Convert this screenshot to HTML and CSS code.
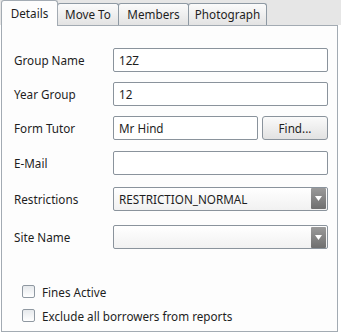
FILE: index.html
```html
<!DOCTYPE html>
<html>
<head>
<meta charset="utf-8">
<link rel="stylesheet" href="styles.css">
</head>
<body>
<div class="window">
  <div class="tabstrip">
    <div class="tab selected">Details</div>
    <div class="tab">Move To</div>
    <div class="tab">Members</div>
    <div class="tab">Photograph</div>
  </div>
  <div class="panel">
    <div class="row r1">
      <label class="lbl">Group Name</label>
      <div class="field">12Z</div>
    </div>
    <div class="row r2">
      <label class="lbl">Year Group</label>
      <div class="field">12</div>
    </div>
    <div class="row r3">
      <label class="lbl">Form Tutor</label>
      <div class="field short">Mr Hind</div>
      <div class="btn">Find...</div>
    </div>
    <div class="row r4">
      <label class="lbl">E-Mail</label>
      <div class="field"></div>
    </div>
    <div class="row r5">
      <label class="lbl">Restrictions</label>
      <div class="field combo"><span class="val">RESTRICTION_NORMAL</span><span class="drop"><svg width="7" height="5" viewBox="0 0 7 5"><path d="M0 0H7L3.5 5Z" fill="#fff"/></svg></span></div>
    </div>
    <div class="row r6">
      <label class="lbl">Site Name</label>
      <div class="field combo"><span class="val"></span><span class="drop"><svg width="7" height="5" viewBox="0 0 7 5"><path d="M0 0H7L3.5 5Z" fill="#fff"/></svg></span></div>
    </div>
    <div class="checks">
      <div class="check"><span class="box"></span><span>Fines Active</span></div>
      <div class="check"><span class="box"></span><span>Exclude all borrowers from reports</span></div>
    </div>
  </div>
</div>
</body>
</html>
```

FILE: styles.css
```css
html, body {
  margin: 0;
  padding: 0;
  background: #ffffff;
  font-family: "Noto Sans", "DejaVu Sans", sans-serif;
  font-size: 11.7px;
  color: #1e1e1e;
}
.window {
  width: 341px;
  height: 335px;
  background: #ffffff;
}
.tabstrip {
  height: 25px;
  background: #e6e6e6;
  display: flex;
  align-items: flex-end;
  padding-left: 1px;
  position: relative;
  z-index: 1;
}
.tab {
  height: 22px;
  box-sizing: border-box;
  border: 1px solid #8e99a3;
  border-bottom: none;
  border-radius: 3px 3px 0 0;
  background: linear-gradient(#fbfbfb, #e3e3e3);
  text-align: center;
  line-height: 21px;
}
.tab + .tab { margin-left: -1px; }
.tab:nth-child(2) { width: 62px; }
.tab:nth-child(3) { width: 71px; }
.tab:nth-child(4) { width: 79px; }
.tab.selected {
  width: 57px;
  height: 26px;
  margin-bottom: -1px;
  background: #fdfdfd;
  line-height: 24px;
  border-color: #a3abb3;
  z-index: 2;
  position: relative;
}
.panel {
  width: 337px;
  height: 307px;
  box-sizing: border-box;
  margin-left: 1px;
  border: 1px solid #a3abb3;
  background: #fdfdfd;
  padding: 22px 9px 0 12px;
}
.row {
  display: flex;
  align-items: center;
  height: 24px;
}
.r2 { margin-top: 10px; }
.r3 { margin-top: 10px; }
.r4 { margin-top: 11px; }
.r5 { margin-top: 11px; height: 25px; }
.r6 { margin-top: 14px; }
.lbl {
  width: 99px;
  flex: none;
}
.field {
  flex: 1;
  height: 24px;
  box-sizing: border-box;
  border: 1px solid #8a939c;
  border-radius: 2px;
  background: #ffffff;
  padding: 0 5px;
  line-height: 22px;
}
.field.short {
  flex: none;
  width: 145px;
}
.btn {
  margin-left: 4px;
  width: 66px;
  height: 24px;
  box-sizing: border-box;
  border: 1px solid #8a939c;
  border-radius: 3px;
  background: linear-gradient(#fafafa, #e2e2e2);
  text-align: center;
  line-height: 22px;
}
.combo {
  display: flex;
  align-items: center;
  padding-right: 1px;
  background: linear-gradient(#ffffff, #f1f1f1);
}
.combo .val { flex: 1; }
.drop {
  width: 15px;
  height: 21px;
  background: linear-gradient(#9a9a9a, #6f6f6f);
  border-radius: 1px;
  display: flex;
  align-items: center;
  justify-content: center;
}
.checks {
  margin-top: 35px;
  padding-left: 8px;
  display: flex;
  flex-direction: column;
  gap: 9px;
}
.check {
  display: flex;
  align-items: center;
  gap: 7px;
  height: 15px;
}
.box {
  width: 13px;
  height: 13px;
  box-sizing: border-box;
  border: 1px solid #8f98a1;
  border-radius: 2px;
  background: linear-gradient(#e6e9ec, #ffffff);
}
```
